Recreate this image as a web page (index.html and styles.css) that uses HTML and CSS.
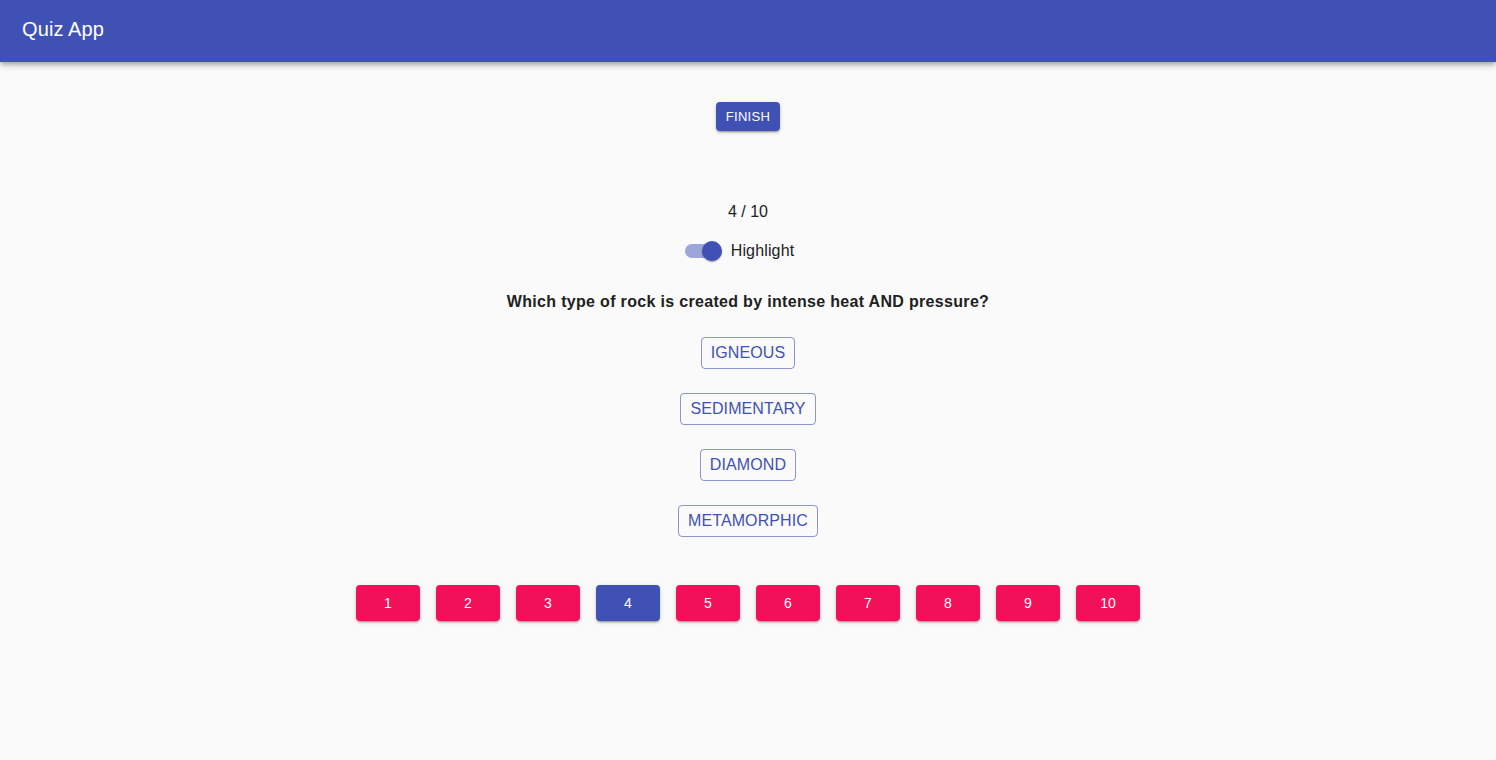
FILE: index.html
```html
<!DOCTYPE html>
<html>
<head>
<meta charset="utf-8">
<link rel="stylesheet" href="styles.css">
</head>
<body>
<header class="appbar"><h1 class="title">Quiz App</h1></header>
<main class="main">
  <button class="finish">Finish</button>
  <div class="counter">4 / 10</div>
  <label class="switch-row">
    <span class="switch"><span class="track"></span><span class="thumb"></span></span>
    <span class="switch-label">Highlight</span>
  </label>
  <h2 class="question">Which type of rock is created by intense heat AND pressure?</h2>
  <div class="options">
    <button class="option">Igneous</button>
    <button class="option">Sedimentary</button>
    <button class="option">Diamond</button>
    <button class="option">Metamorphic</button>
  </div>
  <nav class="pages">
    <button class="page">1</button>
    <button class="page">2</button>
    <button class="page">3</button>
    <button class="page current">4</button>
    <button class="page">5</button>
    <button class="page">6</button>
    <button class="page">7</button>
    <button class="page">8</button>
    <button class="page">9</button>
    <button class="page">10</button>
  </nav>
</main>
</body>
</html>
```
FILE: styles.css
```css
* { box-sizing: border-box; }
html, body { margin: 0; padding: 0; }
body {
  background: #fafafa;
  font-family: "Liberation Sans", Arial, sans-serif;
  color: #212121;
  width: 1496px;
  height: 760px;
  overflow: hidden;
}
.appbar {
  height: 62px;
  background: #3f51b5;
  display: flex;
  align-items: center;
  padding: 0 22px;
  box-shadow: 0 2px 4px -1px rgba(0,0,0,0.2), 0 4px 5px 0 rgba(0,0,0,0.14), 0 1px 10px 0 rgba(0,0,0,0.12);
  position: relative;
  z-index: 1;
}
.title {
  margin: 0;
  color: #fff;
  font-size: 20px;
  font-weight: 400;
  line-height: 1;
  padding-bottom: 4px;
  letter-spacing: 0.1px;
}
.main {
  display: flex;
  flex-direction: column;
  align-items: center;
  padding-top: 40px;
}
button { font-family: inherit; cursor: pointer; }
.finish {
  background: #3f51b5;
  color: #fff;
  border: none;
  border-radius: 4px;
  height: 29px;
  padding: 0 10px;
  font-size: 13px;
  letter-spacing: 0.3px;
  text-transform: uppercase;
  box-shadow: 0 3px 1px -2px rgba(0,0,0,0.2), 0 2px 2px 0 rgba(0,0,0,0.14), 0 1px 5px 0 rgba(0,0,0,0.12);
}
.counter {
  margin-top: 71px;
  font-size: 16px;
  line-height: 20px;
  height: 20px;
}
.switch-row {
  margin-top: 19px;
  display: flex;
  align-items: center;
  height: 20px;
  gap: 9px;
  padding-right: 18px;
}
.switch {
  position: relative;
  width: 38px;
  height: 20px;
  display: block;
}
.track {
  position: absolute;
  left: 1px;
  top: 3px;
  width: 34px;
  height: 14px;
  border-radius: 7px;
  background: #3f51b5;
  opacity: 0.5;
}
.thumb {
  position: absolute;
  left: 18px;
  top: 0;
  width: 20px;
  height: 20px;
  border-radius: 50%;
  background: #3f51b5;
  box-shadow: 0 2px 1px -1px rgba(0,0,0,0.2), 0 1px 1px 0 rgba(0,0,0,0.14), 0 1px 3px 0 rgba(0,0,0,0.12);
}
.switch-label {
  font-size: 16px;
  line-height: 20px;
  letter-spacing: 0.15px;
}
.question {
  margin: 31px 0 0;
  font-size: 16px;
  font-weight: 700;
  line-height: 20px;
  height: 20px;
  letter-spacing: 0.32px;
}
.options {
  margin-top: 25px;
  display: flex;
  flex-direction: column;
  align-items: center;
  gap: 24px;
}
.option {
  height: 32px;
  padding: 0 9px;
  border: 1px solid rgba(63,81,181,0.6);
  border-radius: 4px;
  background: transparent;
  color: #3f51b5;
  font-size: 16px;
  text-transform: uppercase;
  letter-spacing: 0.1px;
}
.pages {
  margin-top: 48px;
  display: flex;
  gap: 16px;
}
.page {
  width: 64px;
  height: 36px;
  border: none;
  border-radius: 4px;
  background: #f21159;
  color: #fff;
  font-size: 14px;
  box-shadow: 0 3px 1px -2px rgba(0,0,0,0.2), 0 2px 2px 0 rgba(0,0,0,0.14), 0 1px 5px 0 rgba(0,0,0,0.12);
}
.page.current { background: #3f51b5; }
```
